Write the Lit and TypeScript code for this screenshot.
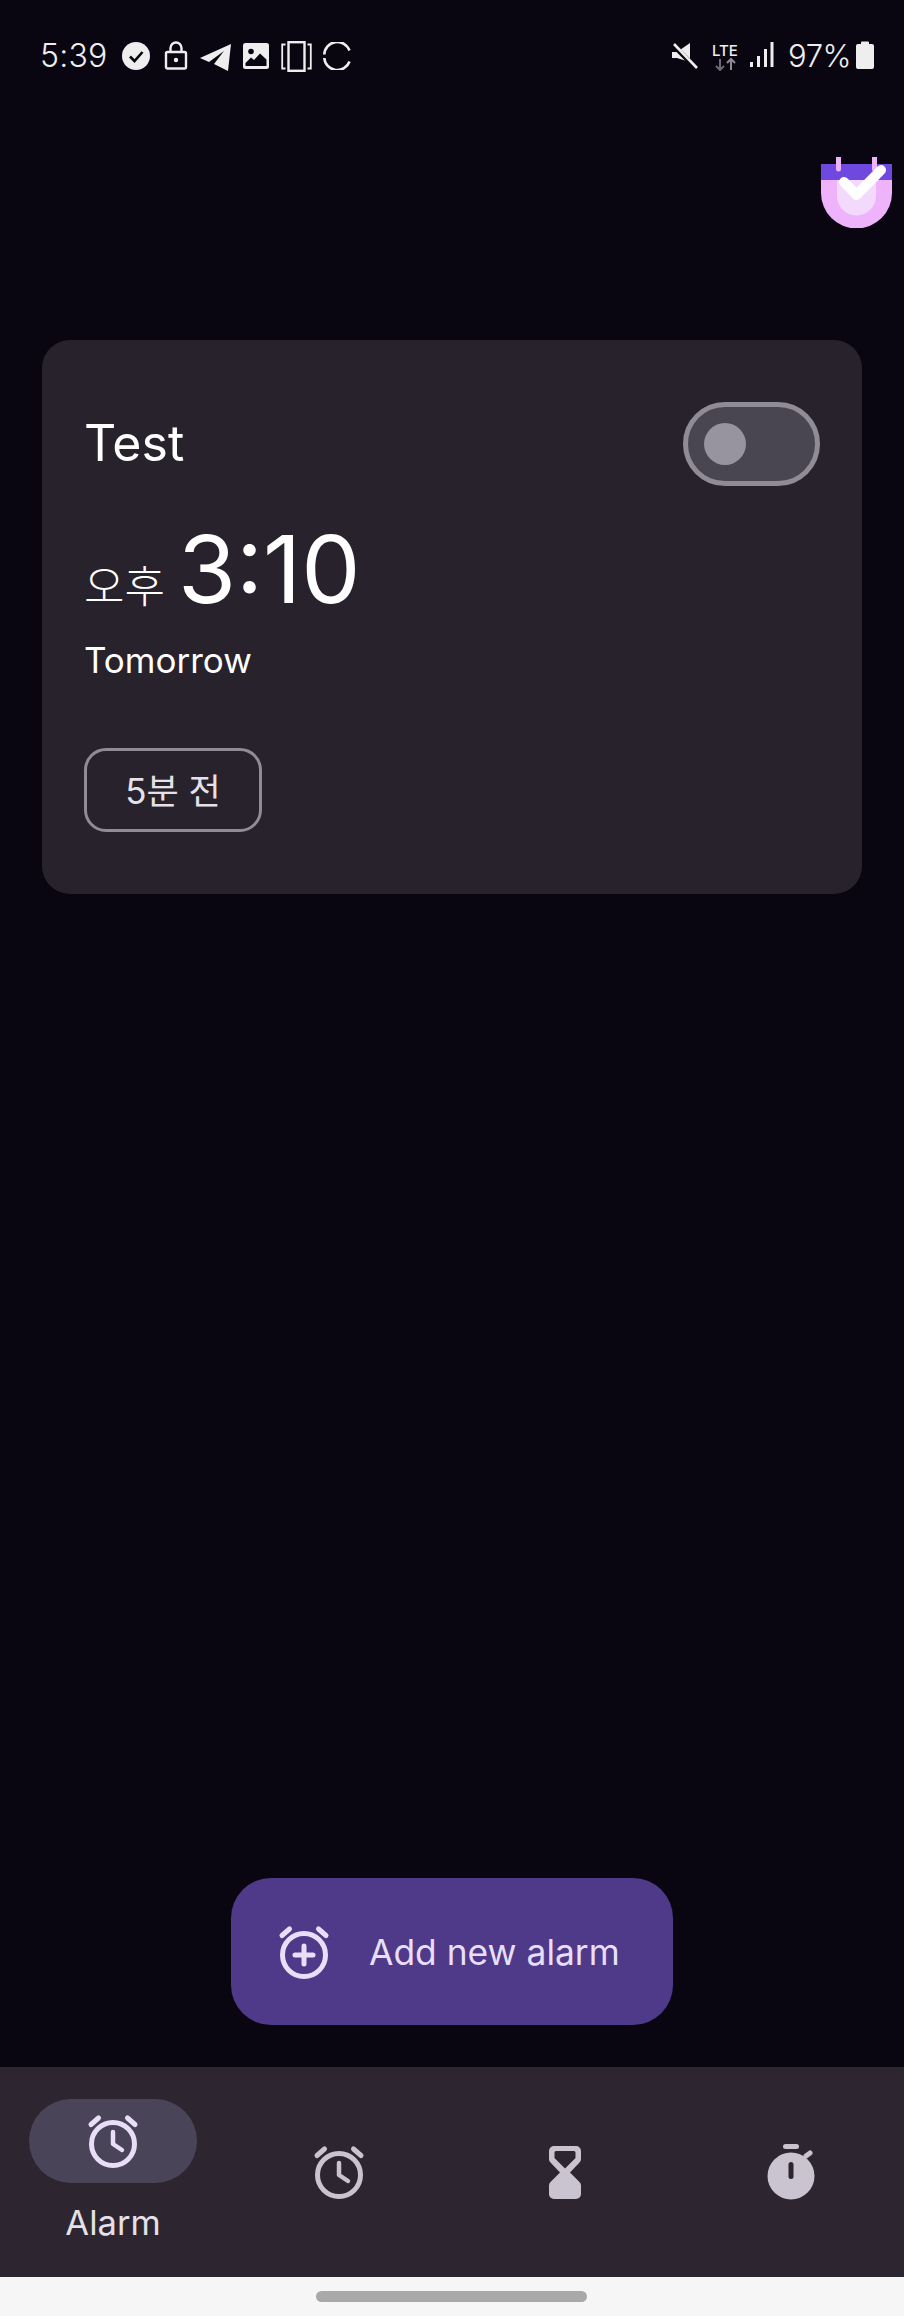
import { LitElement, html, css, svg } from 'lit';
import { customElement } from 'lit/decorators.js';

const alarmIcon = (inner: unknown) => html`
  <svg class="alarm" viewBox="0 0 52 54" fill="none" stroke="currentColor" stroke-linecap="round" stroke-linejoin="round">
    <circle cx="26" cy="30" r="21.5" stroke-width="5"></circle>
    <path d="M4 10.5 11.5 4M48 10.5 40.5 4" stroke-width="5"></path>
    ${inner}
  </svg>
`;

const clockHands = svg`<path d="M26 18v12l9 6" stroke-width="4.5"></path>`;
const plusMark = svg`<path d="M26 21v18M17 30h18" stroke-width="5"></path>`;

@customElement('status-bar')
class StatusBar extends LitElement {
  static styles = css`
    :host {
      display: flex;
      justify-content: space-between;
      height: 112px;
      box-sizing: border-box;
      padding: 41px 30px 0 40px;
      color: #eeeeee;
      font-family: Inter, "Noto Sans", sans-serif;
    }
    .side {
      display: flex;
      align-items: flex-start;
    }
    .time {
      font-size: 32px;
      font-weight: 300;
      line-height: 30px;
      width: 82px;
      letter-spacing: 0.2px;
    }
    .pct {
      font-size: 31px;
      font-weight: 300;
      line-height: 30px;
      width: 66px;
      letter-spacing: -0.4px;
    }
    svg {
      display: block;
      flex: none;
    }
  `;

  render() {
    return html`
      <div class="side">
        <span class="time">5:39</span>
        <svg width="28" height="28" viewBox="0 0 28 28" style="margin:1px 0 0 0">
          <circle cx="14" cy="14" r="14" fill="currentColor"></circle>
          <path d="M8 14.5l4.5 4.5L20.5 10" fill="none" stroke="#090612" stroke-width="2.6"></path>
        </svg>
        <svg width="24" height="29" viewBox="0 0 24 29" style="margin:0 0 0 14px" fill="none" stroke="currentColor" stroke-width="2.4">
          <rect x="2" y="11" width="20" height="16.5" rx="1.5"></rect>
          <path d="M6.5 11V7a5.5 5.5 0 0 1 11 0v4"></path>
          <circle cx="12" cy="19" r="2.2" fill="currentColor" stroke="none"></circle>
        </svg>
        <svg width="32" height="27" viewBox="0 0 32 27" style="margin:3px 0 0 12px" fill="currentColor">
          <path d="M31 0 L0 14 L9 18 L24 7 L14 20 L28 27 Z"></path>
        </svg>
        <svg width="26" height="26" viewBox="0 0 26 26" style="margin:2px 0 0 11px">
          <rect width="26" height="26" rx="2.5" fill="currentColor"></rect>
          <circle cx="8" cy="8.5" r="2.8" fill="#090612"></circle>
          <path d="M2.5 20 L8 14.5 L11 17 L17 10.5 L23.5 16.5 V23 H2.5 Z" fill="#090612"></path>
        </svg>
        <svg width="31" height="31" viewBox="0 0 31 31" style="margin:0 0 0 12px" fill="none" stroke="currentColor">
          <rect x="7.5" y="1.2" width="16" height="28.6" stroke-width="2.4"></rect>
          <path d="M4.500 3.500H1.200V27.500H4.500M26.500 3.500H29.800V27.500H26.500" stroke-width="1.8"></path>
        </svg>
        <svg width="28" height="28" viewBox="0 0 28 28" style="margin:1px 0 0 11px" fill="none" stroke="currentColor" stroke-width="2.6">
          <path d="M26.500 8.500A13 13 0 0 0 1.300 12.500"></path>
          <path d="M1.300 16A13 13 0 0 0 26.500 19.500"></path>
        </svg>
      </div>
      <div class="side">
        <svg width="26" height="26" viewBox="0 0 26 26" style="margin:2px 0 0 0">
          <path d="M0 9H5L18 0V19L5 15H0Z" fill="currentColor"></path>
          <path d="M2 3 24 25" stroke="#090612" stroke-width="5"></path>
          <path d="M2 1 25 25" stroke="currentColor" stroke-width="2.6"></path>
        </svg>
        <svg width="28" height="30" viewBox="0 0 28 30" style="margin:0 0 0 14px">
          <text x="0" y="15" font-size="15" font-weight="500" font-family="Inter" fill="currentColor">LTE</text>
          <path d="M8 18v11M4 25l4 4 4-4" fill="none" stroke="#6d6b72" stroke-width="2"></path>
          <path d="M19 29V18M15 22l4-4 4 4" fill="none" stroke="#8e8c92" stroke-width="2"></path>
        </svg>
        <svg width="24" height="26" viewBox="0 0 24 26" style="margin:1px 0 0 10px" fill="currentColor">
          <rect x="0" y="20" width="3" height="5"></rect>
          <rect x="7" y="14" width="3" height="11"></rect>
          <rect x="14" y="7" width="3" height="18"></rect>
          <rect x="20.500" y="0" width="3" height="25"></rect>
        </svg>
        <span class="pct" style="margin-left:14px">97%</span>
        <svg width="18" height="28" viewBox="0 0 18 28" style="margin:0 0 0 2px" fill="currentColor">
          <path d="M5 1.500a1 1 0 0 1 1-1h6a1 1 0 0 1 1 1V3h3a2 2 0 0 1 2 2v21a2 2 0 0 1-2 2H2a2 2 0 0 1-2-2V5a2 2 0 0 1 2-2h3z"></path>
        </svg>
      </div>
    `;
  }
}

@customElement('alarm-card')
class AlarmCard extends LitElement {
  static styles = css`
    :host {
      display: block;
      height: 554px;
      box-sizing: border-box;
      padding: 62px 42px 0;
      border-radius: 28px;
      background: #27222c;
      color: #ffffff;
      font-family: Inter, "Noto Sans CJK KR", sans-serif;
    }
    .head {
      display: flex;
      justify-content: space-between;
      align-items: center;
      height: 84px;
    }
    .title {
      font-size: 50px;
      line-height: 60px;
      margin-bottom: 3px;
    }
    .toggle {
      display: flex;
      align-items: center;
      box-sizing: border-box;
      width: 137px;
      height: 84px;
      padding-left: 16px;
      border: 5px solid #8f8b97;
      border-radius: 42px;
      background: #4a4651;
    }
    .thumb {
      width: 42px;
      height: 42px;
      border-radius: 50%;
      background: #98949f;
    }
    .time {
      display: flex;
      align-items: baseline;
      gap: 13px;
      margin-top: 33px;
      height: 100px;
    }
    .ampm {
      font-size: 44px;
      font-family: "Noto Sans CJK KR", sans-serif;
      font-weight: 300;
    }
    .clock {
      font-size: 94px;
      line-height: 100px;
    }
    .when {
      margin-top: 19px;
      font-size: 35px;
      line-height: 44px;
    }
    .chip {
      display: flex;
      align-items: center;
      justify-content: center;
      box-sizing: border-box;
      width: 178px;
      height: 84px;
      margin-top: 66px;
      padding-bottom: 3px;
      border: 3px solid #8f8b97;
      border-radius: 22px;
      color: #e6e1e8;
      font-size: 35px;
    }
  `;

  render() {
    return html`
      <div class="head">
        <span class="title">Test</span>
        <div class="toggle"><div class="thumb"></div></div>
      </div>
      <div class="time"><span class="ampm">오후</span><span class="clock">3:10</span></div>
      <div class="when">Tomorrow</div>
      <div class="chip">5분 전</div>
    `;
  }
}

@customElement('bottom-nav')
class BottomNav extends LitElement {
  static styles = css`
    :host {
      display: grid;
      grid-template-columns: repeat(4, 226px);
      height: 210px;
      background: #2d2631;
      font-family: Inter, "Noto Sans", sans-serif;
    }
    .item {
      display: flex;
      flex-direction: column;
      align-items: center;
      justify-content: center;
      color: #cac4d0;
    }
    .pill {
      display: flex;
      align-items: center;
      justify-content: center;
      width: 168px;
      height: 84px;
      border-radius: 42px;
      background: #4a4458;
      color: #e8def8;
    }
    .label {
      margin-top: 19px;
      margin-bottom: 1px;
      font-size: 34.500px;
      line-height: 42px;
      color: #e6e0e9;
    }
    .alarm {
      display: block;
      width: 52px;
      height: 54px;
    }
    .hourglass {
      display: block;
      width: 32px;
      height: 53px;
    }
    .stopwatch {
      display: block;
      width: 52px;
      height: 56px;
    }
  `;

  render() {
    return html`
      <div class="item">
        <div class="pill">${alarmIcon(clockHands)}</div>
        <div class="label">Alarm</div>
      </div>
      <div class="item">${alarmIcon(clockHands)}</div>
      <div class="item">
        <svg class="hourglass" viewBox="0 0 32 53" fill="currentColor" fill-rule="evenodd">
          <path d="M5 0H27a5 5 0 0 1 5 5V13a5 5 0 0 1-1.500 3.500L21 26.500 30.500 36a5 5 0 0 1 1.500 3.500V48a5 5 0 0 1-5 5H5a5 5 0 0 1-5-5V39.500A5 5 0 0 1 1.500 36L11 26.500 1.500 16.500A5 5 0 0 1 0 13V5A5 5 0 0 1 5 0ZM7 5H25a1.500 1.500 0 0 1 1.500 1.500V12L16 22.500 5.500 12V6.500A1.500 1.500 0 0 1 7 5Z"></path>
        </svg>
      </div>
      <div class="item">
        <svg class="stopwatch" viewBox="0 0 52 56" fill="currentColor">
          <rect x="18" y="0" width="16" height="5" rx="2.500"></rect>
          <path d="M41 12l4-3" stroke="currentColor" stroke-width="5" stroke-linecap="round"></path>
          <circle cx="26" cy="32" r="23.500"></circle>
          <rect x="23.500" y="18" width="5" height="17" rx="2.500" fill="#2d2631"></rect>
        </svg>
      </div>
    `;
  }
}

@customElement('app-root')
class AppRoot extends LitElement {
  static styles = css`
    :host {
      display: flex;
      flex-direction: column;
      position: relative;
      width: 904px;
      height: 2316px;
      background: #090612;
    }
    .logo {
      position: absolute;
      left: 821px;
      top: 157px;
    }
    main {
      flex: 1;
      display: flex;
      flex-direction: column;
      padding: 228px 42px 42px;
    }
    .fab {
      display: flex;
      align-items: center;
      box-sizing: border-box;
      width: 442px;
      height: 147px;
      margin: auto auto 0;
      padding-left: 47px;
      border-radius: 40px;
      background: #4f3989;
      color: #e8def8;
      font-family: Inter, "Noto Sans", sans-serif;
      font-size: 35.400px;
    }
    .fab span {
      margin: 1px 0 0 39px;
    }
    .fab .alarm {
      display: block;
      width: 52px;
      height: 54px;
    }
    .home {
      display: flex;
      align-items: center;
      justify-content: center;
      height: 39px;
      background: #f6f6f6;
    }
    .handle {
      width: 271px;
      height: 11px;
      margin-right: 1px;
      border-radius: 6px;
      background: #a9a9a9;
    }
  `;

  render() {
    return html`
      <status-bar></status-bar>
      <svg class="logo" width="71" height="71" viewBox="0 0 71 71">
        <path d="M0 9a2 2 0 0 1 2-2H69a2 2 0 0 1 2 2V36a35.500 35.500 0 0 1-71 0Z" fill="#eeb3fb"></path>
        <path d="M0 9a2 2 0 0 1 2-2H69a2 2 0 0 1 2 2V23H0Z" fill="#6f48e0"></path>
        <path d="M16 23H55V39a19.500 19.500 0 0 1-39 0Z" fill="#f3dafd"></path>
        <path d="M17.500 0V12M53.500 0V12" stroke="#eeb3fb" stroke-width="5" stroke-linecap="round"></path>
        <path d="M23 25 35.500 38 60 13" fill="none" stroke="#ffffff" stroke-width="10" stroke-linecap="round" stroke-linejoin="round"></path>
      </svg>
      <main>
        <alarm-card></alarm-card>
        <div class="fab">${alarmIcon(plusMark)}<span>Add new alarm</span></div>
      </main>
      <bottom-nav></bottom-nav>
      <div class="home"><div class="handle"></div></div>
    `;
  }
}
